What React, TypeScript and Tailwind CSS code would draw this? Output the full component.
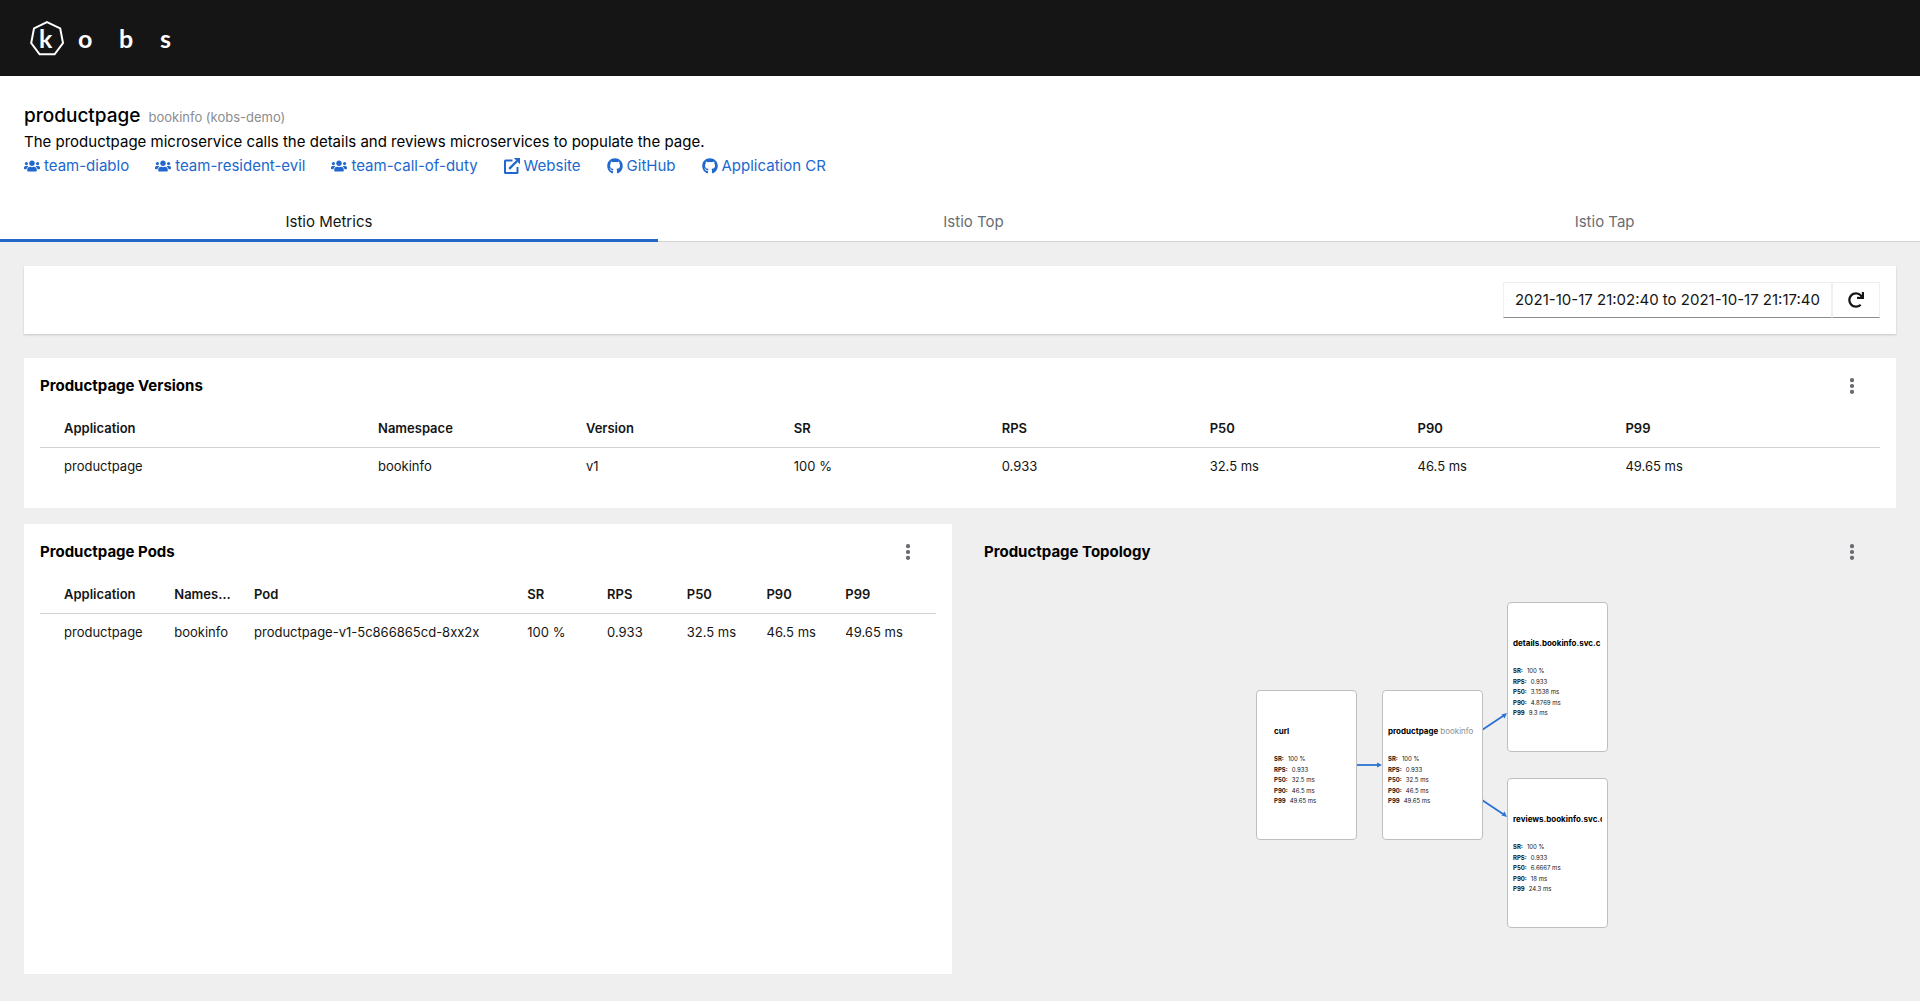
import type { ReactNode } from "react";
import { FaGithub, FaRedo, FaUsers } from "react-icons/fa";

type Column = { label: string; width: string };

const versionColumns: Column[] = [
  { label: "Application", width: "w-[17.5%]" },
  { label: "Namespace", width: "w-[11.3%]" },
  { label: "Version", width: "w-[11.3%]" },
  { label: "SR", width: "w-[11.3%]" },
  { label: "RPS", width: "w-[11.3%]" },
  { label: "P50", width: "w-[11.3%]" },
  { label: "P90", width: "w-[11.3%]" },
  { label: "P99", width: "w-[14.7%]" },
];

const podColumns: Column[] = [
  { label: "Application", width: "w-[13.2%]" },
  { label: "Namespace", width: "w-[8.9%]" },
  { label: "Pod", width: "w-[30.5%]" },
  { label: "SR", width: "w-[8.9%]" },
  { label: "RPS", width: "w-[8.9%]" },
  { label: "P50", width: "w-[8.9%]" },
  { label: "P90", width: "w-[8.8%]" },
  { label: "P99", width: "w-[11.9%]" },
];

const links: { label: string; icon: ReactNode }[] = [
  { label: "team-diablo", icon: <FaUsers size={16} /> },
  { label: "team-resident-evil", icon: <FaUsers size={16} /> },
  { label: "team-call-of-duty", icon: <FaUsers size={16} /> },
  { label: "Website", icon: <ExternalLinkIcon /> },
  { label: "GitHub", icon: <FaGithub size={16} /> },
  { label: "Application CR", icon: <FaGithub size={16} /> },
];

const nodes = [
  {
    name: "curl",
    namespace: "",
    place: "left-0 top-[88px]",
    inset: "pl-[17px]",
    values: ["100 %", "0.933", "32.5 ms", "46.5 ms", "49.65 ms"],
  },
  {
    name: "productpage",
    namespace: "bookinfo",
    place: "left-[126px] top-[88px]",
    inset: "px-[5px]",
    values: ["100 %", "0.933", "32.5 ms", "46.5 ms", "49.65 ms"],
  },
  {
    name: "details.bookinfo.svc.c",
    namespace: "",
    place: "left-[251px] top-0",
    inset: "px-[5px]",
    values: ["100 %", "0.933", "3.1538 ms", "4.8769 ms", "9.3 ms"],
  },
  {
    name: "reviews.bookinfo.svc.c",
    namespace: "",
    place: "left-[251px] top-[176px]",
    inset: "px-[5px]",
    values: ["100 %", "0.933", "6.6667 ms", "18 ms", "24.3 ms"],
  },
];

const metricLabels = ["SR:", "RPS:", "P50:", "P90:", "P99"];

function ExternalLinkIcon() {
  return (
    <svg width="16" height="16" viewBox="0 0 16 16" fill="none">
      <path d="M8.5 2.5H1.5Q1 2.5 1 3V14.5Q1 15 1.5 15H13Q13.5 15 13.5 14.5V9" stroke="currentColor" strokeWidth="2" />
      <path d="M5.2 10.8L13 3" stroke="currentColor" strokeWidth="2.4" />
      <path d="M9.8 0H16V6.2Z" fill="currentColor" />
    </svg>
  );
}

function Logo() {
  return (
    <svg
      width="160"
      height="44"
      viewBox="24 16 160 44"
      role="img"
      aria-label="kobs"
      className="fill-white font-[family-name:Lato] text-[25px] font-bold"
    >
      <path
        d="M47 22.2L60.2 28.4L63 43L54.6 54.3H39.6L31.2 43L34 28.4Z"
        fill="none"
        stroke="white"
        strokeWidth="2"
      />
      <text x="39" y="48">k</text>
      <text x="78" y="48">o</text>
      <text x="119" y="48">b</text>
      <text x="160" y="48">s</text>
    </svg>
  );
}

function Kebab({ label }: { label: string }) {
  return (
    <button type="button" aria-label={label} className="flex h-6 w-9 items-center justify-center text-[#6a6e73]">
      <svg width="4" height="16" viewBox="0 0 4 16" fill="currentColor">
        <circle cx="2" cy="2.2" r="2.1" />
        <circle cx="2" cy="8" r="2.1" />
        <circle cx="2" cy="13.8" r="2.1" />
      </svg>
    </button>
  );
}

function Panel({ title, className, children }: { title: string; className: string; children: ReactNode }) {
  return (
    <section className={`p-4 ${className}`}>
      <header className="flex items-center justify-between pr-[10px]">
        <h2 className="text-[15px] leading-6 font-bold text-black">{title}</h2>
        <Kebab label={`${title} actions`} />
      </header>
      {children}
    </section>
  );
}

function MetricsTable({ columns, row }: { columns: Column[]; row: string[] }) {
  return (
    <table className="mt-3 w-full table-fixed text-left text-[13px] leading-[21px]">
      <thead>
        <tr className="border-b border-[#d2d2d2]">
          {columns.map((column) => (
            <th
              key={column.label}
              scope="col"
              className={`truncate py-2 pr-1 pl-4 font-semibold first:pl-6 ${column.width}`}
            >
              {column.label}
            </th>
          ))}
        </tr>
      </thead>
      <tbody>
        <tr>
          {row.map((value, index) => (
            <td key={columns[index].label} className="py-2 pl-4 whitespace-nowrap first:pl-6">
              {value}
            </td>
          ))}
        </tr>
      </tbody>
    </table>
  );
}

function Topology() {
  return (
    <div className="relative mx-auto mt-[38px] h-[326px] w-[352px]">
      <svg className="absolute inset-0 h-full w-full text-[#2b72d4]" viewBox="0 0 352 326" fill="currentColor">
        <g stroke="currentColor" strokeWidth="1.8">
          <path d="M100 163H122" />
          <path d="M226 128L247 114" />
          <path d="M226 198L247 212" />
        </g>
        <path d="M121 160.5L126 163L121 165.5Z" />
        <path d="M245.500 112.500L251 111L248.500 116.500Z" />
        <path d="M245.500 213.500L251 215L248.500 209.500Z" />
      </svg>
      {nodes.map((node) => (
        <article
          key={node.name}
          className={`absolute h-[150px] w-[101px] overflow-hidden rounded border border-[#bfbfbf] bg-white pt-[34px] ${node.place} ${node.inset}`}
        >
          <h3 className="flex gap-[2px] overflow-hidden text-[8px] leading-3 font-bold whitespace-nowrap text-black">
            {node.name}
            {node.namespace && <span className="font-normal text-[#8a8d90]">{node.namespace}</span>}
          </h3>
          <dl className="mt-[17px] flex h-[52px] flex-col justify-between text-[6px] leading-[10px]">
            {metricLabels.map((label, index) => (
              <div key={label} className="flex gap-1">
                <dt className="font-bold">{label}</dt>
                <dd>{node.values[index]}</dd>
              </div>
            ))}
          </dl>
        </article>
      ))}
    </div>
  );
}

export default function App() {
  return (
    <div className="flex min-h-screen flex-col bg-[#efefef] font-['Inter','Liberation_Sans',sans-serif] text-[15px] leading-6 text-[#151515]">
      <header className="flex h-19 items-center bg-[#151515] px-6">
        <a href="#home" aria-label="kobs home">
          <Logo />
        </a>
      </header>

      <div className="bg-white px-6 pt-[26px] pb-6">
        <div className="flex items-baseline gap-2">
          <h1 className="text-[19px] leading-7 font-medium text-black">productpage</h1>
          <span className="text-[13px] leading-6 text-[#8a8d90]">bookinfo (kobs-demo)</span>
        </div>
        <p className="text-black">
          The productpage microservice calls the details and reviews microservices to populate the page.
        </p>
        <nav className="flex gap-[26px] text-[#2068ce]">
          {links.map((link) => (
            <a key={link.label} href="#link" className="flex items-center gap-1">
              {link.icon}
              {link.label}
            </a>
          ))}
        </nav>
      </div>

      <div role="tablist" className="flex bg-white text-[#6a6e73]">
        <button
          type="button"
          role="tab"
          aria-selected="true"
          className="h-10 flex-auto border-b-3 border-[#2467cb] px-4 pt-[3px] text-[#151515]"
        >
          Istio Metrics
        </button>
        <button type="button" role="tab" aria-selected="false" className="h-10 flex-auto border-b border-[#d2d2d2] px-4">
          Istio Top
        </button>
        <button type="button" role="tab" aria-selected="false" className="h-10 flex-auto border-b border-[#d2d2d2] px-4">
          Istio Tap
        </button>
      </div>

      <main className="p-6">
        <div className="flex justify-end bg-white p-4 shadow-[0_1px_2px_rgba(3,3,3,0.16)]">
          <button type="button" className="h-9 border border-[#efefef] border-b-[#8a8d90] px-[11px]">
            2021-10-17 21:02:40 to 2021-10-17 21:17:40
          </button>
          <button
            type="button"
            aria-label="Refresh"
            className="flex h-9 w-12 items-center justify-center border border-[#efefef] border-b-[#8a8d90]"
          >
            <FaRedo size={16} />
          </button>
        </div>

        <Panel title="Productpage Versions" className="mt-6 min-h-[150px] bg-white">
          <MetricsTable
            columns={versionColumns}
            row={["productpage", "bookinfo", "v1", "100 %", "0.933", "32.5 ms", "46.5 ms", "49.65 ms"]}
          />
        </Panel>

        <div className="mt-4 grid grid-cols-2 gap-4">
          <Panel title="Productpage Pods" className="min-h-[450px] bg-white">
            <MetricsTable
              columns={podColumns}
              row={[
                "productpage",
                "bookinfo",
                "productpage-v1-5c866865cd-8xx2x",
                "100 %",
                "0.933",
                "32.5 ms",
                "46.5 ms",
                "49.65 ms",
              ]}
            />
          </Panel>
          <Panel title="Productpage Topology" className="min-h-[450px]">
            <Topology />
          </Panel>
        </div>
      </main>
    </div>
  );
}
